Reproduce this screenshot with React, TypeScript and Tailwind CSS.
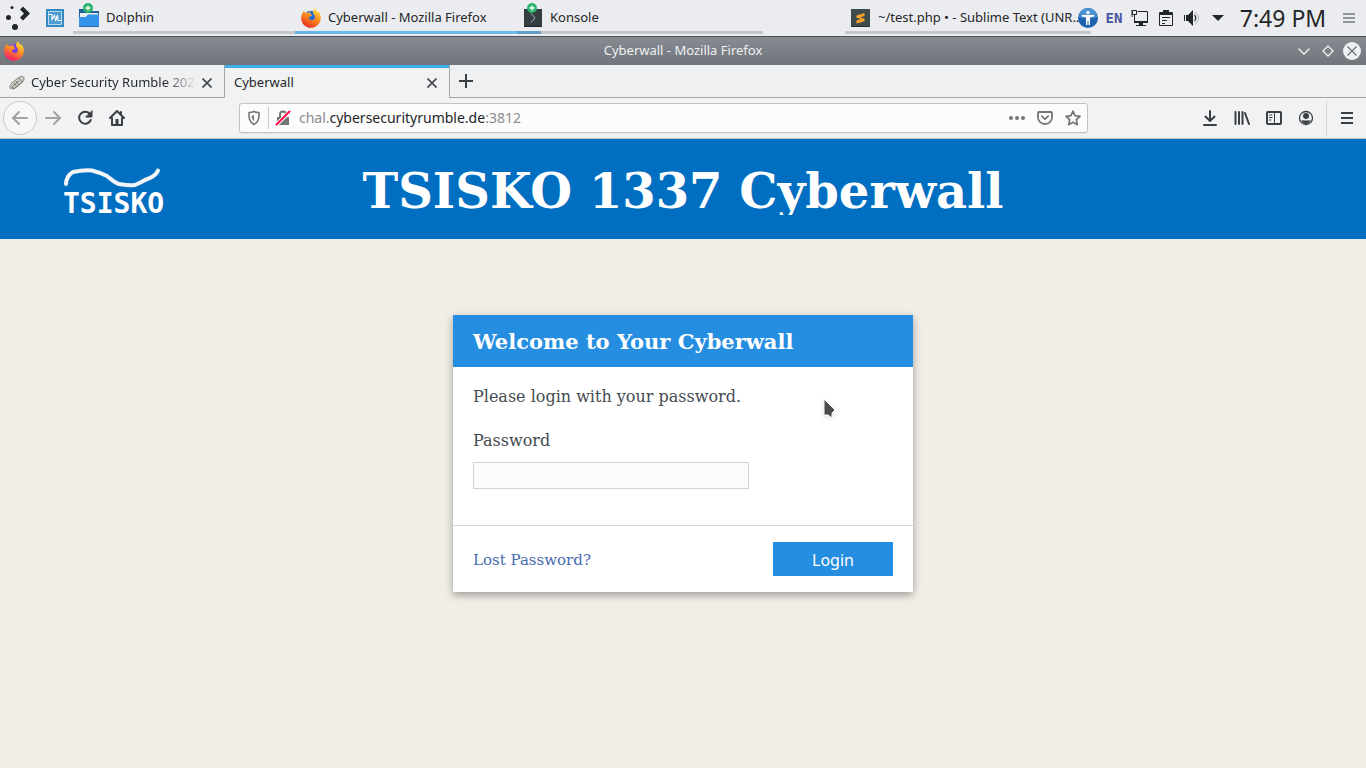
import type { ReactNode } from "react";

function FirefoxLogo({ purple = false }: { purple?: boolean }) {
  const id = purple ? "fx-new" : "fx-old";
  return (
    <svg viewBox="0 0 20 20" className="w-5 h-5 shrink-0" aria-hidden="true">
      <defs>
        <linearGradient id={id} x1="0.8" y1="0" x2="0.3" y2="1">
          <stop offset="0" stopColor="#ffe53b" />
          <stop offset="0.45" stopColor="#ff9020" />
          <stop offset="1" stopColor={purple ? "#f5156c" : "#e62e20"} />
        </linearGradient>
      </defs>
      <circle cx="10" cy="10.2" r="7.5" fill={purple ? "#7a42d6" : "#1f6fd0"} />
      <path
        d="M2.6 3.2C3.4 3.6 4 4.2 4.5 4.9 5.5 4.5 6.6 4.6 7.4 4.9 8 4 8.8 3.4 9.8 3.2 9.2 4.1 9 5 9.3 5.8L11.2 7.2C10.4 8.4 9.2 8.3 8.3 8.8 7.6 9.4 7.9 10.4 8.6 11.2 10.5 12.6 13 12.3 13.8 10.2 14.4 8.4 13.6 6.6 12 5.6 12.4 4 11.8 1.8 14 .3 14.2 2 15.8 3 16.8 4.4 17.1 3.9 17.1 3.4 17 2.9 18.8 4.9 20 7.4 19.8 10.2 19.5 15.6 15.4 19.8 10 19.8 4.4 19.8.2 15.6.2 10.2.2 7.5 1 5 2.6 3.2Z"
        fill={`url(#${id})`}
      />
    </svg>
  );
}

function LaunchBadge() {
  return (
    <svg viewBox="0 0 10 10" className="absolute left-1 -top-[5px] w-[10px] h-[10px]" aria-hidden="true">
      <circle cx="5" cy="5" r="5" fill="#2ab56b" />
      <path d="M5 2.5v5M2.500 5h5" stroke="#fff" strokeWidth="1.300" />
    </svg>
  );
}

function FolderIcon() {
  return (
    <svg viewBox="0 0 20 20" className="w-5 h-5" aria-hidden="true">
      <path d="M0 1h8l2 2h10v7H0z" fill="#1f5f99" />
      <path d="M1 5h18v4H1z" fill="#e8eef2" />
      <path d="M0 9h6.500l2.500-2.500h11V19H0z" fill="#3593ea" />
      <path d="M0 18h20v1H0z" fill="#2469ad" />
    </svg>
  );
}

function KonsoleIcon() {
  return (
    <svg viewBox="0 0 20 20" className="w-5 h-5" aria-hidden="true">
      <path d="M1 1h18v18H1z" fill="#343d42" />
      <path d="M1 18h18v1H1z" fill="#20262a" />
      <path d="M8 5.500 12 10l-4 4.500" fill="none" stroke="#aab4b8" strokeWidth="1" />
    </svg>
  );
}

function SublimeIcon() {
  return (
    <svg viewBox="0 0 20 20" className="w-5 h-5" aria-hidden="true">
      <path d="M0 1h19v18H0z" fill="#3e4b4c" />
      <path d="M0 18h19v1H0z" fill="#242d2e" />
      <path
        d="M13.500 5v3L9 9.500l4.500 1.300v2.400l-8 2.300v-3L10 11 5.500 9.800V7.400z"
        fill="#fba22c"
      />
    </svg>
  );
}

type Task = {
  title: string;
  icon: ReactNode;
  bar: string;
  spacing: string;
  starting?: boolean;
};

const tasks: Task[] = [
  { title: "Dolphin", icon: <FolderIcon />, bar: "bg-[#c5c8cc]", spacing: "", starting: true },
  {
    title: "Cyberwall - Mozilla Firefox",
    icon: <FirefoxLogo />,
    bar: "bg-[#54b2ea]/85",
    spacing: "-ml-6",
  },
  {
    title: "Konsole",
    icon: <KonsoleIcon />,
    bar: "bg-[#4b5258]/25",
    spacing: "-ml-6",
    starting: true,
  },
  {
    title: "~/test.php • - Sublime Text (UNR...",
    icon: <SublimeIcon />,
    bar: "bg-[#c5c8cc]",
    spacing: "ml-auto",
  },
];

function TaskButton({ task }: { task: Task }) {
  return (
    <button
      className={`relative flex items-center w-[246px] h-full pl-[6px] text-left text-[13px] whitespace-nowrap ${task.spacing}`}
    >
      <span className="relative w-5 h-5 shrink-0">
        {task.icon}
        {task.starting && <LaunchBadge />}
      </span>
      <span className="ml-[7px]">{task.title}</span>
      <span className={`absolute left-0 right-0 bottom-[2px] h-[3px] ${task.bar}`} />
    </button>
  );
}

function TrayCell({ label, children }: { label: string; children: ReactNode }) {
  return (
    <button className="flex items-center justify-center w-[26px] h-full" aria-label={label}>
      {children}
    </button>
  );
}

function Panel() {
  return (
    <div className="flex h-9 pr-[3px] bg-[#ebecef] text-[#232629]">
      <button className="w-9 h-full pl-1" aria-label="Application launcher">
        <svg viewBox="0 0 28 28" className="w-7 h-7" fill="#232629">
          <circle cx="8" cy="3.500" r="1.500" />
          <circle cx="4.500" cy="13.500" r="2.500" />
          <circle cx="11" cy="23" r="3" />
          <path d="m16 5.500 3-3 7 7-7 7-3-3 4-4z" />
        </svg>
      </button>
      <button className="w-[37px] h-full flex items-center pl-[10px]" aria-label="System monitor">
        <svg viewBox="0 0 18 18" className="w-[18px] h-[18px]">
          <path d="M0 0h18v18H0z" fill="#3489c0" />
          <path d="M2.500 2.500h13v13h-13z" fill="#4a9bd0" stroke="#b9dcf1" />
          <path
            d="M3 5.500h3v5l2.500-4 1 5.500 2-6 .5 5.500h3"
            fill="none"
            stroke="#fff"
            strokeWidth="1.100"
          />
        </svg>
      </button>
      <div className="flex flex-1 min-w-0">
        {tasks.map((task) => (
          <TaskButton key={task.title} task={task} />
        ))}
      </div>
      <div className="relative flex items-center -ml-4">
        <TrayCell label="Accessibility">
          <svg viewBox="0 0 20 20" className="w-5 h-5">
            <circle cx="10" cy="10" r="10" fill="#1c62ae" />
            <path d="M1 9a9 9 0 0 1 18 0c-5 2-13 2-18 0z" fill="#4a92d4" />
            <circle cx="10" cy="4.500" r="1.700" fill="#fff" />
            <path d="M4 7h12v1.500l-4 .7V17h-1.500v-4h-1v4H8V9.200l-4-.7z" fill="#fff" />
          </svg>
        </TrayCell>
        <TrayCell label="Keyboard layout">
          <span className="font-['DejaVu_Sans_Mono','Noto_Sans',sans-serif] text-sm font-bold text-[#4a55a2]">
            EN
          </span>
        </TrayCell>
        <TrayCell label="Display">
          <svg viewBox="0 0 18 18" className="w-[18px] h-[18px]" fill="none" stroke="#232629">
            <path d="M6.500 2.500h10v10h-13V8M1.500 1.500h4v4h-4zM3.500 5.500V9M1 1v7" />
            <path d="M3 12h14v2H3zM8 14h4v2H8z" fill="#232629" stroke="none" />
            <path d="M5 16.500h10" />
          </svg>
        </TrayCell>
        <TrayCell label="Clipboard">
          <svg viewBox="0 0 16 16" className="w-4 h-4" fill="none" stroke="#232629">
            <path d="M1.500 2.500h13v13h-13z" />
            <path d="M5 0h6v2h3v3H2V2h3z" fill="#232629" stroke="none" />
            <path d="M4 7.500h8M4 10.500h5M4 13.500h3" />
          </svg>
        </TrayCell>
        <TrayCell label="Volume">
          <svg viewBox="0 0 18 18" className="w-[18px] h-[18px]" fill="none">
            <path d="M1 6h1v6H1zM3 6h2l5-5v16l-5-5H3z" fill="#232629" />
            <path d="M11.500 6q2.500 3 0 6" stroke="#232629" strokeWidth="1.200" />
            <path d="M12 2.500q7 6.500 0 13" stroke="#b4b7ba" />
          </svg>
        </TrayCell>
        <TrayCell label="Show hidden icons">
          <svg viewBox="0 0 12 6" className="w-3 h-[6px]" fill="#232629">
            <path d="M0 0h12L6 6z" />
          </svg>
        </TrayCell>
        <time className="w-[104px] text-center text-[23px] leading-9">7:49 PM</time>
        <button className="w-7 h-full flex items-center justify-center" aria-label="Panel menu">
          <svg viewBox="0 0 12 10" className="w-3 h-[10px]" stroke="#75787b" strokeWidth="1.500">
            <path d="M0 1h12M0 5h12M0 9h12" />
          </svg>
        </button>
      </div>
    </div>
  );
}

function TitleBar() {
  return (
    <div className="grid grid-cols-[1fr_auto_1fr] items-center h-[29px] px-[2px] border-t border-[#4c5157] bg-linear-to-b from-[#868c92] to-[#70757c] text-[#eff0f1] text-[13px]">
      <div className="pl-[2px]">
        <FirefoxLogo purple />
      </div>
      <span>Cyberwall - Mozilla Firefox</span>
      <div className="flex justify-end">
        <button className="w-6 h-6 flex items-center justify-center" aria-label="Minimize">
          <svg viewBox="0 0 18 18" className="w-[18px] h-[18px]" fill="none" stroke="#eff0f1">
            <path d="m3.500 6.500 5.500 5.500 5.500-5.500" strokeWidth="1.300" />
          </svg>
        </button>
        <button className="w-6 h-6 flex items-center justify-center" aria-label="Maximize">
          <svg viewBox="0 0 18 18" className="w-[18px] h-[18px]" fill="none" stroke="#eff0f1">
            <path d="m9 4 5 5-5 5-5-5z" strokeWidth="1.300" />
          </svg>
        </button>
        <button className="w-6 h-6 flex items-center justify-center" aria-label="Close">
          <svg viewBox="0 0 18 18" className="w-[18px] h-[18px]">
            <circle cx="9" cy="9" r="9" fill="#eff0f1" />
            <path d="m4.500 4.500 9 9m0-9-9 9" stroke="#6b7077" strokeWidth="1.300" />
          </svg>
        </button>
      </div>
    </div>
  );
}

function TabClose() {
  return (
    <button className="ml-auto w-5 h-5 flex items-center justify-center shrink-0" aria-label="Close tab">
      <svg viewBox="0 0 10 10" className="w-[10px] h-[10px]" stroke="#45484b" strokeWidth="1.700">
        <path d="m.5.5 9 9m0-9-9 9" />
      </svg>
    </button>
  );
}

function TabStrip() {
  return (
    <div className="flex h-[33px] bg-[#eff0f2] text-[13px] text-[#232629]">
      <div className="flex items-center w-56 pt-[3px] pl-[9px] pr-[7px] border-b border-[#a2a5a8]">
        <svg viewBox="0 0 16 16" className="w-4 h-4 shrink-0" fill="none" aria-hidden="true">
          <path d="m2 14-1-4 8-7 4-1 2 1-1 5-7 6z" fill="#d0d0cc" />
          <path
            d="M2 14c-2-1-1-4 1-6l6-5c3-2 6-2 6 0s-1 4-3 5l-6 5c-3 2-4 0-2-2l6-5M3 11l2 3M5 8l3 4M7 6l3 4M10 3l3 4"
            stroke="#77776f"
          />
        </svg>
        <button className="ml-[6px] flex-1 text-left overflow-hidden whitespace-nowrap bg-linear-to-r from-[#232629] from-80% to-transparent bg-clip-text text-transparent">
          Cyber Security Rumble 2020
        </button>
        <TabClose />
      </div>
      <div className="flex items-center w-[226px] pt-[2px] pl-[9px] pr-[7px] border-x border-[#a2a5a8] bg-[#f1f2f4] shadow-[inset_0_3px_0_#3daee9]">
        <button>Cyberwall</button>
        <TabClose />
      </div>
      <div className="flex items-center flex-1 pl-[9px] border-b border-[#a2a5a8]">
        <button aria-label="New tab">
          <svg viewBox="0 0 14 14" className="w-[14px] h-[14px]" stroke="#3c3f42" strokeWidth="2">
            <path d="M7 0v14M0 7h14" />
          </svg>
        </button>
      </div>
    </div>
  );
}

function ToolButton({
  label,
  className = "w-8 h-8",
  children,
}: {
  label: string;
  className?: string;
  children: ReactNode;
}) {
  return (
    <button
      aria-label={label}
      className={`flex items-center justify-center shrink-0 ${className}`}
    >
      <svg
        viewBox="0 0 16 16"
        className="w-4 h-4"
        fill="none"
        stroke="currentColor"
        strokeWidth="2"
        strokeLinecap="round"
        strokeLinejoin="round"
      >
        {children}
      </svg>
    </button>
  );
}

function UrlBar() {
  return (
    <div className="flex items-center flex-[8] min-w-0 h-[30px] rounded-[3px] border border-[#c2c3c5] bg-[#fcfcfc] shadow-[0_1px_1px_rgba(0,0,0,0.06)] text-[#737475]">
      <ToolButton label="Tracking protection" className="w-7 h-7">
        <path d="M8 1.500c2 1 3.500 1 5 1 0 5 .2 9-5 12-5.200-3-5-7-5-12 1.500 0 3 0 5-1Z" strokeWidth="1.600" />
        <path d="M8 5v6q-2-1-2.300-5z" fill="currentColor" stroke="none" />
      </ToolButton>
      <span className="w-px h-[22px] bg-[#c8c9ca]" />
      <ToolButton label="Connection is not secure" className="w-7 h-7">
        <path d="M2 7h12v8H2z" fill="currentColor" stroke="none" />
        <path d="M5 7V4.500a3 3 0 0 1 6 0V7" />
        <path d="M1 15 15 1.500" stroke="#fcfcfc" strokeWidth="4" />
        <path d="M1.500 14.500 14.500 1.500" stroke="#ff0a43" strokeWidth="2" />
      </ToolButton>
      <a
        href="http://chal.cybersecurityrumble.de:3812"
        className="flex-1 min-w-0 pl-[2px] text-sm text-[#8b8c8d] whitespace-nowrap"
      >
        chal.<span className="text-[#232629]">cybersecurityrumble.de</span>:3812
      </a>
      <button aria-label="Page actions" className="w-7 h-7 flex items-center justify-center">
        <svg viewBox="0 0 16 4" className="w-4 h-1" fill="currentColor">
          <circle cx="2" cy="2" r="2" />
          <circle cx="8" cy="2" r="2" />
          <circle cx="14" cy="2" r="2" />
        </svg>
      </button>
      <button aria-label="Save to Pocket" className="w-7 h-7 flex items-center justify-center">
        <svg viewBox="0 0 16 16" className="w-4 h-4" fill="none" stroke="currentColor" strokeWidth="1.800">
          <path d="M2 2h12q1 0 1 1v4.500a7 6.500 0 0 1-14 0V3q0-1 1-1Z" />
          <path d="M4.800 6.200 8 9.200l3.200-3" strokeLinecap="round" strokeLinejoin="round" />
        </svg>
      </button>
      <button aria-label="Bookmark this page" className="w-7 h-7 flex items-center justify-center">
        <svg viewBox="0 0 16 16" className="w-4 h-4" fill="none" stroke="currentColor" strokeWidth="1.700" strokeLinejoin="round">
          <path d="m8 1.200 2 4.500 5 .6-3.700 3.400 1 5L8 12.300l-4.300 2.400 1-5L1 6.300l5-.6z" />
        </svg>
      </button>
    </div>
  );
}

function NavBar() {
  return (
    <div className="flex items-center h-[41px] px-[3px] border-b border-[#c0c2c5] bg-[#f1f2f4] text-[#3c3f42]">
      <ToolButton
        label="Back"
        className="w-[34px] h-[34px] rounded-full border border-[#c8c9cb] bg-[#f6f7f8] text-[#a1a3a5]"
      >
        <path d="M15 8H1.500M7 2 1 8l6 6" />
      </ToolButton>
      <ToolButton label="Forward" className="w-8 h-8 text-[#a1a3a5]">
        <path d="M1 8h13.500M9 2l6 6-6 6" />
      </ToolButton>
      <ToolButton label="Reload">
        <path d="M13 4.200A6 6 0 1 0 13.700 10" />
        <path d="M15 1v6H9z" fill="currentColor" strokeWidth="1" />
      </ToolButton>
      <ToolButton label="Home">
        <path d="m1 8 7-7 7 7M3 8v7h10V8M12 2v2" />
        <path d="M8 9v5" strokeWidth="3" strokeLinecap="butt" />
      </ToolButton>
      <div className="flex-1" />
      <UrlBar />
      <div className="flex-1" />
      <ToolButton label="Downloads">
        <path d="M8 1v9M3.500 6.500 8 11l4.500-4.500M2 15h12" />
      </ToolButton>
      <ToolButton label="Library">
        <path d="M1.500 2v12M5 2v12M8.500 2v12M11 3l4 11" />
      </ToolButton>
      <ToolButton label="Sidebars">
        <path d="M2 2h12q1 0 1 1v10q0 1-1 1H2q-1 0-1-1V3q0-1 1-1Z" />
        <path d="M8.500 2v12M3.500 5H6M3.500 7.500H6M3.500 10H5" strokeWidth="1" />
      </ToolButton>
      <ToolButton label="Account">
        <circle cx="8" cy="8" r="6.500" strokeWidth="1.300" />
        <circle cx="8" cy="6" r="3" fill="currentColor" stroke="none" />
        <path d="M3.500 10q4.500 1 9 0-1 4-4.500 4t-4.500-4Z" fill="currentColor" stroke="none" />
      </ToolButton>
      <span className="w-px h-[34px] mx-1 bg-[#d3d4d6]" />
      <ToolButton label="Open menu">
        <path d="M2 3h12M2 8h12M2 13h12" strokeLinecap="butt" />
      </ToolButton>
    </div>
  );
}

function SiteHeader() {
  return (
    <header className="grid grid-cols-[1fr_auto_1fr] h-[100px] bg-[#006ec1] text-white">
      <div className="pl-[63px] pt-7">
        <svg viewBox="0 0 100 23" className="w-[100px] h-[23px]" fill="none" aria-hidden="true">
          <path
            d="M3 17C3 12 6 7 10 5 17 3.500 22 3 29 3.500 35 5 40 7 44 9 49 13 52 16 56 17 62 18 67 19 72 18 79 15 83 12 87 11 91 9 94 6 95 3.500"
            stroke="#f2f4f8"
            strokeWidth="4"
            strokeLinecap="round"
            strokeLinejoin="round"
          />
        </svg>
        <div className="font-['DejaVu_Sans_Mono',monospace] text-[28px] leading-7 font-bold">
          TSISKO
        </div>
      </div>
      <h1 className="mt-6 h-[52px] leading-14 overflow-hidden whitespace-nowrap text-5xl font-bold">
        TSISKO 1337 Cyberwall
      </h1>
    </header>
  );
}

function LoginCard() {
  return (
    <form className="w-[460px] mx-auto mt-[76px] bg-white shadow-[0_3px_8px_rgba(0,0,0,0.35)]">
      <h2 className="px-5 pt-[2px] bg-[#268ee0] text-white text-[21px] leading-[50px] font-bold">
        Welcome to Your Cyberwall
      </h2>
      <div className="px-5 pt-5 pb-9 border-b border-[#d3d3d3]">
        <p className="leading-5">Please login with your password.</p>
        <label htmlFor="password" className="block mt-6 leading-5">
          Password
        </label>
        <input
          id="password"
          type="password"
          className="block w-[276px] h-[27px] mt-[11px] px-1 border border-[#d3d3d3] bg-[#fcfcfc]"
        />
      </div>
      <div className="flex items-center justify-between px-5 py-4">
        <a href="#" className="pt-[2px] text-[15px] text-[#466bb0]">
          Lost Password?
        </a>
        <button
          type="button"
          className="w-[120px] h-[34px] pt-[2px] bg-[#268ee0] text-white text-base font-['Noto_Sans',sans-serif]"
        >
          Login
        </button>
      </div>
    </form>
  );
}

function Pointer() {
  return (
    <svg
      viewBox="0 0 16 24"
      className="absolute left-[822px] top-[396px] w-4 h-6 pointer-events-none drop-shadow-sm"
      aria-hidden="true"
    >
      <path d="M2 3v16h4l4 3v-5l3-3z" fill="#4b4b4b" stroke="#fff" strokeWidth="1" />
    </svg>
  );
}

export default function App() {
  return (
    <div className="relative flex flex-col min-h-screen font-['Noto_Sans',sans-serif]">
      <Panel />
      <TitleBar />
      <TabStrip />
      <NavBar />
      <main className="flex-1 bg-[#f1eee7] text-[#444b51] font-['DejaVu_Serif',serif]">
        <SiteHeader />
        <LoginCard />
      </main>
      <Pointer />
    </div>
  );
}
